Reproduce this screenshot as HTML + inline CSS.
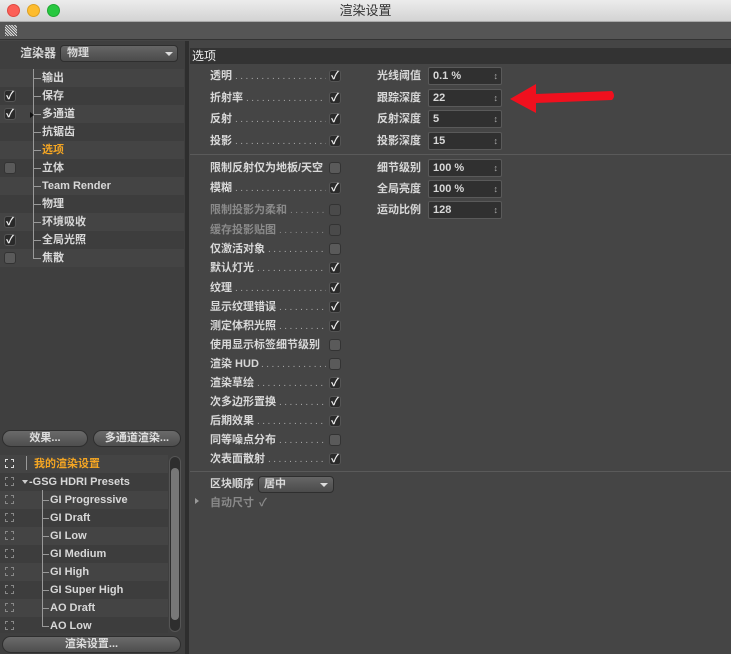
<!DOCTYPE html>
<html><head><meta charset="utf-8">
<style>
*{margin:0;padding:0;box-sizing:border-box}
body{width:731px;height:654px;overflow:hidden;background:#454545;font-family:"Liberation Sans","Noto Sans CJK SC",sans-serif;font-size:11px;color:#d8d8d8;position:relative}
.a{position:absolute}
.t{position:absolute;font-weight:bold;white-space:nowrap;line-height:14px}
.cb{position:absolute;width:12px;height:12px;border-radius:3px;background:#2a2a2a;border:1px solid #555;color:#eee;font-size:11px;line-height:10px;text-align:center;font-weight:bold}
.cbo{position:absolute;width:12px;height:12px;border-radius:3px;background:#5a5a5a;border:1px solid #333}
.dots{position:absolute;color:#aaa;font-size:10px;letter-spacing:2.5px;line-height:14px;white-space:nowrap;overflow:hidden}
.num{position:absolute;width:74px;height:18px;background:#303030;border:1px solid #5a5a5a;border-radius:2px;font-weight:bold;padding-left:4px;line-height:16px;font-size:11px}
.num:after{content:"\2195";position:absolute;right:3px;top:0;font-size:9px;color:#aaa}
.btn{position:absolute;height:17px;border-radius:9px;background:linear-gradient(#6a6a6a,#4e4e4e);border:1px solid #2e2e2e;text-align:center;font-weight:bold;line-height:15px;color:#ddd}
</style></head><body>
<div class="a" style="left:0;top:0;width:731px;height:22px;background:linear-gradient(#ececec,#d3d3d3);border-bottom:1px solid #aaa"></div>
<div class="a" style="left:7px;top:4px;width:13px;height:13px;border-radius:50%;background:#fc5f57;border:1px solid #de4a42"></div>
<div class="a" style="left:27px;top:4px;width:13px;height:13px;border-radius:50%;background:#fdbc2e;border:1px solid #dea123"></div>
<div class="a" style="left:47px;top:4px;width:13px;height:13px;border-radius:50%;background:#28c840;border:1px solid #1fa832"></div>
<div class="t" style="left:0;width:731px;text-align:center;top:4px;color:#333;font-weight:normal;font-size:13px">渲染设置</div>
<div class="a" style="left:0;top:22px;width:731px;height:18px;background:#555;border-bottom:1px solid #333"></div>
<div class="a" style="left:5px;top:25px;width:12px;height:11px;background:repeating-linear-gradient(45deg,#ddd 0 1px,#555 1px 2px)"></div>
<div class="a" style="left:0;top:41px;width:185px;height:613px;background:#3f3f3f"></div>
<div class="a" style="left:185px;top:41px;width:4px;height:613px;background:#2e2e2e"></div>
<div class="t" style="left:20px;top:46px;font-size:12px">渲染器</div>
<div class="a" style="left:60px;top:45px;width:118px;height:17px;border-radius:4px;background:linear-gradient(#666,#4b4b4b);border:1px solid #2e2e2e"></div>
<div class="t" style="left:67px;top:46px">物理</div>
<div class="a" style="left:165px;top:52px;border:4px solid transparent;border-top:4px solid #ddd"></div>
<div class="a" style="left:0;top:69px;width:184px;height:198px;background:repeating-linear-gradient(#444 0 18px,#3d3d3d 18px 36px)"></div>
<div class="a" style="left:33px;top:69px;width:1px;height:190px;background:#999"></div>
<div class="btn" style="left:2px;top:430px;width:86px">效果...</div>
<div class="btn" style="left:93px;top:430px;width:88px">多通道渲染...</div>
<div class="a" style="left:0;top:455px;width:168px;height:178px;background:repeating-linear-gradient(#444 0 18px,#3d3d3d 18px 36px)"></div>
<div class="a" style="left:169px;top:456px;width:12px;height:176px;border-radius:6px;background:#2e2e2e;border:1px solid #555"></div>
<div class="a" style="left:171px;top:468px;width:8px;height:152px;border-radius:4px;background:#777"></div>
<div class="a" style="left:26px;top:456px;width:1px;height:14px;background:#999"></div>
<div class="a" style="left:42px;top:490px;width:1px;height:136px;background:#999"></div>
<div class="btn" style="left:2px;top:636px;width:179px">渲染设置...</div>
<div class="a" style="left:190px;top:48px;width:541px;height:16px;background:#333"></div>
<div class="t" style="left:192px;top:49px;font-weight:normal;color:#eee;font-size:12px">选项</div>
<div class="a" style="left:190px;top:154px;width:541px;height:1px;background:#2a2a2a;border-bottom:1px solid #5a5a5a"></div>
<div class="a" style="left:190px;top:471px;width:541px;height:1px;background:#2a2a2a;border-bottom:1px solid #5a5a5a"></div>
<div class="t" style="left:210px;top:477px">区块顺序</div>
<div class="a" style="left:258px;top:476px;width:76px;height:17px;border-radius:4px;background:linear-gradient(#666,#4b4b4b);border:1px solid #2e2e2e"></div>
<div class="t" style="left:264px;top:477px">居中</div>
<div class="a" style="left:320px;top:483px;border:4px solid transparent;border-top:4px solid #ddd"></div>
<div class="a" style="left:195px;top:498px;border:3px solid transparent;border-left:4px solid #999"></div>
<div class="t" style="left:210px;top:496px;color:#8a8a8a">自动尺寸</div>
<div class="t" style="left:259px;top:496px;color:#8a8a8a">✓</div>
<svg class="a" style="left:500px;top:78px" width="120" height="40"><path d="M10 21 L36 6 L36 16 L112 13 Q116 18 112 22 L36 25 L36 35 Z" fill="#f0101e"/></svg>
<div id="lt"></div>
<div id="rt"></div>
<script>
var L=[["输出",0,0],["保存",1,0],["多通道",1,0],["抗锯齿",0,0],["选项",0,1],["立体",2,0],["Team Render",0,0],["物理",0,0],["环境吸收",1,0],["全局光照",1,0],["焦散",2,0]];
var h="";
L.forEach(function(r,i){var y=69+i*18;
h+='<div class="a" style="left:34px;top:'+(y+9)+'px;width:7px;height:1px;background:#999"></div>';
h+='<div class="t" style="left:42px;top:'+(y+2)+'px;'+(r[2]?'color:#f5a623':'')+'">'+r[0]+'</div>';
if(r[1]==1)h+='<div class="cb" style="left:4px;top:'+(y+3)+'px">✓</div>';
if(r[1]==2)h+='<div class="cbo" style="left:4px;top:'+(y+3)+'px"></div>';});
h+='<div class="a" style="left:30px;top:112px;border:3px solid transparent;border-left:4px solid #111"></div>';
var B=[["我的渲染设置",34,1],["-GSG HDRI Presets",29,0],["GI Progressive",50,0],["GI Draft",50,0],["GI Low",50,0],["GI Medium",50,0],["GI High",50,0],["GI Super High",50,0],["AO Draft",50,0],["AO Low",50,0]];
B.forEach(function(r,i){var y=455+i*18;
h+='<div class="a" style="left:5px;top:'+(y+4)+'px;width:9px;height:9px;border:1px dashed '+(i?'#888':'#ddd')+'"></div>';
if(i>=2)h+='<div class="a" style="left:42px;top:'+(y+9)+'px;width:7px;height:1px;background:#999"></div>';
h+='<div class="t" style="left:'+r[1]+'px;top:'+(y+2)+'px;'+(r[2]?'color:#f5a623':'')+'">'+r[0]+'</div>';});
h+='<div class="a" style="left:22px;top:480px;border:3px solid transparent;border-top:4px solid #ccc"></div>';
document.getElementById("lt").innerHTML=h;
var R=[["透明",69,1],["折射率",91,1],["反射",112,1],["投影",134,1],
["限制反射仅为地板/天空",161,2],["模糊",181,1],["限制投影为柔和",203,3],["缓存投影贴图",223,3],["仅激活对象",242,2],["默认灯光",261,1],["纹理",281,1],["显示纹理错误",300,1],["测定体积光照",319,1],["使用显示标签细节级别",338,2],["渲染 HUD",357,2],["渲染草绘",376,1],["次多边形置换",395,1],["后期效果",414,1],["同等噪点分布",433,2],["次表面散射",452,1]];
var g="";
R.forEach(function(r){var dim=r[2]==3;var col=dim?'color:#8a8a8a':'';
var w=r[0].replace(/[ A-Z\/]/g,"").length*11+(r[0].indexOf("HUD")>=0?26:0);
g+='<div class="t" style="left:210px;top:'+r[1]+'px;'+col+'">'+r[0]+'</div>';
if(r[0].length<9)g+='<div class="dots" style="left:'+(213+w)+'px;width:'+(326-213-w)+'px;top:'+(r[1]+1)+'px;'+col+'">..............................</div>';
if(r[2]==1)g+='<div class="cb" style="left:329px;top:'+(r[1]+1)+'px">✓</div>';
else g+='<div class="cbo" style="left:329px;top:'+(r[1]+1)+'px;'+(dim?'background:#4a4a4a':'')+'"></div>';});
var N=[["光线阈值","0.1 %",69],["跟踪深度","22",91],["反射深度","5",112],["投影深度","15",134],["细节级别","100 %",161],["全局亮度","100 %",182],["运动比例","128",203]];
N.forEach(function(r){g+='<div class="t" style="left:377px;top:'+r[2]+'px">'+r[0]+'</div><div class="num" style="left:428px;top:'+(r[2]-2)+'px">'+r[1]+'</div>';});
document.getElementById("rt").innerHTML=g;
</script>
</body></html>
